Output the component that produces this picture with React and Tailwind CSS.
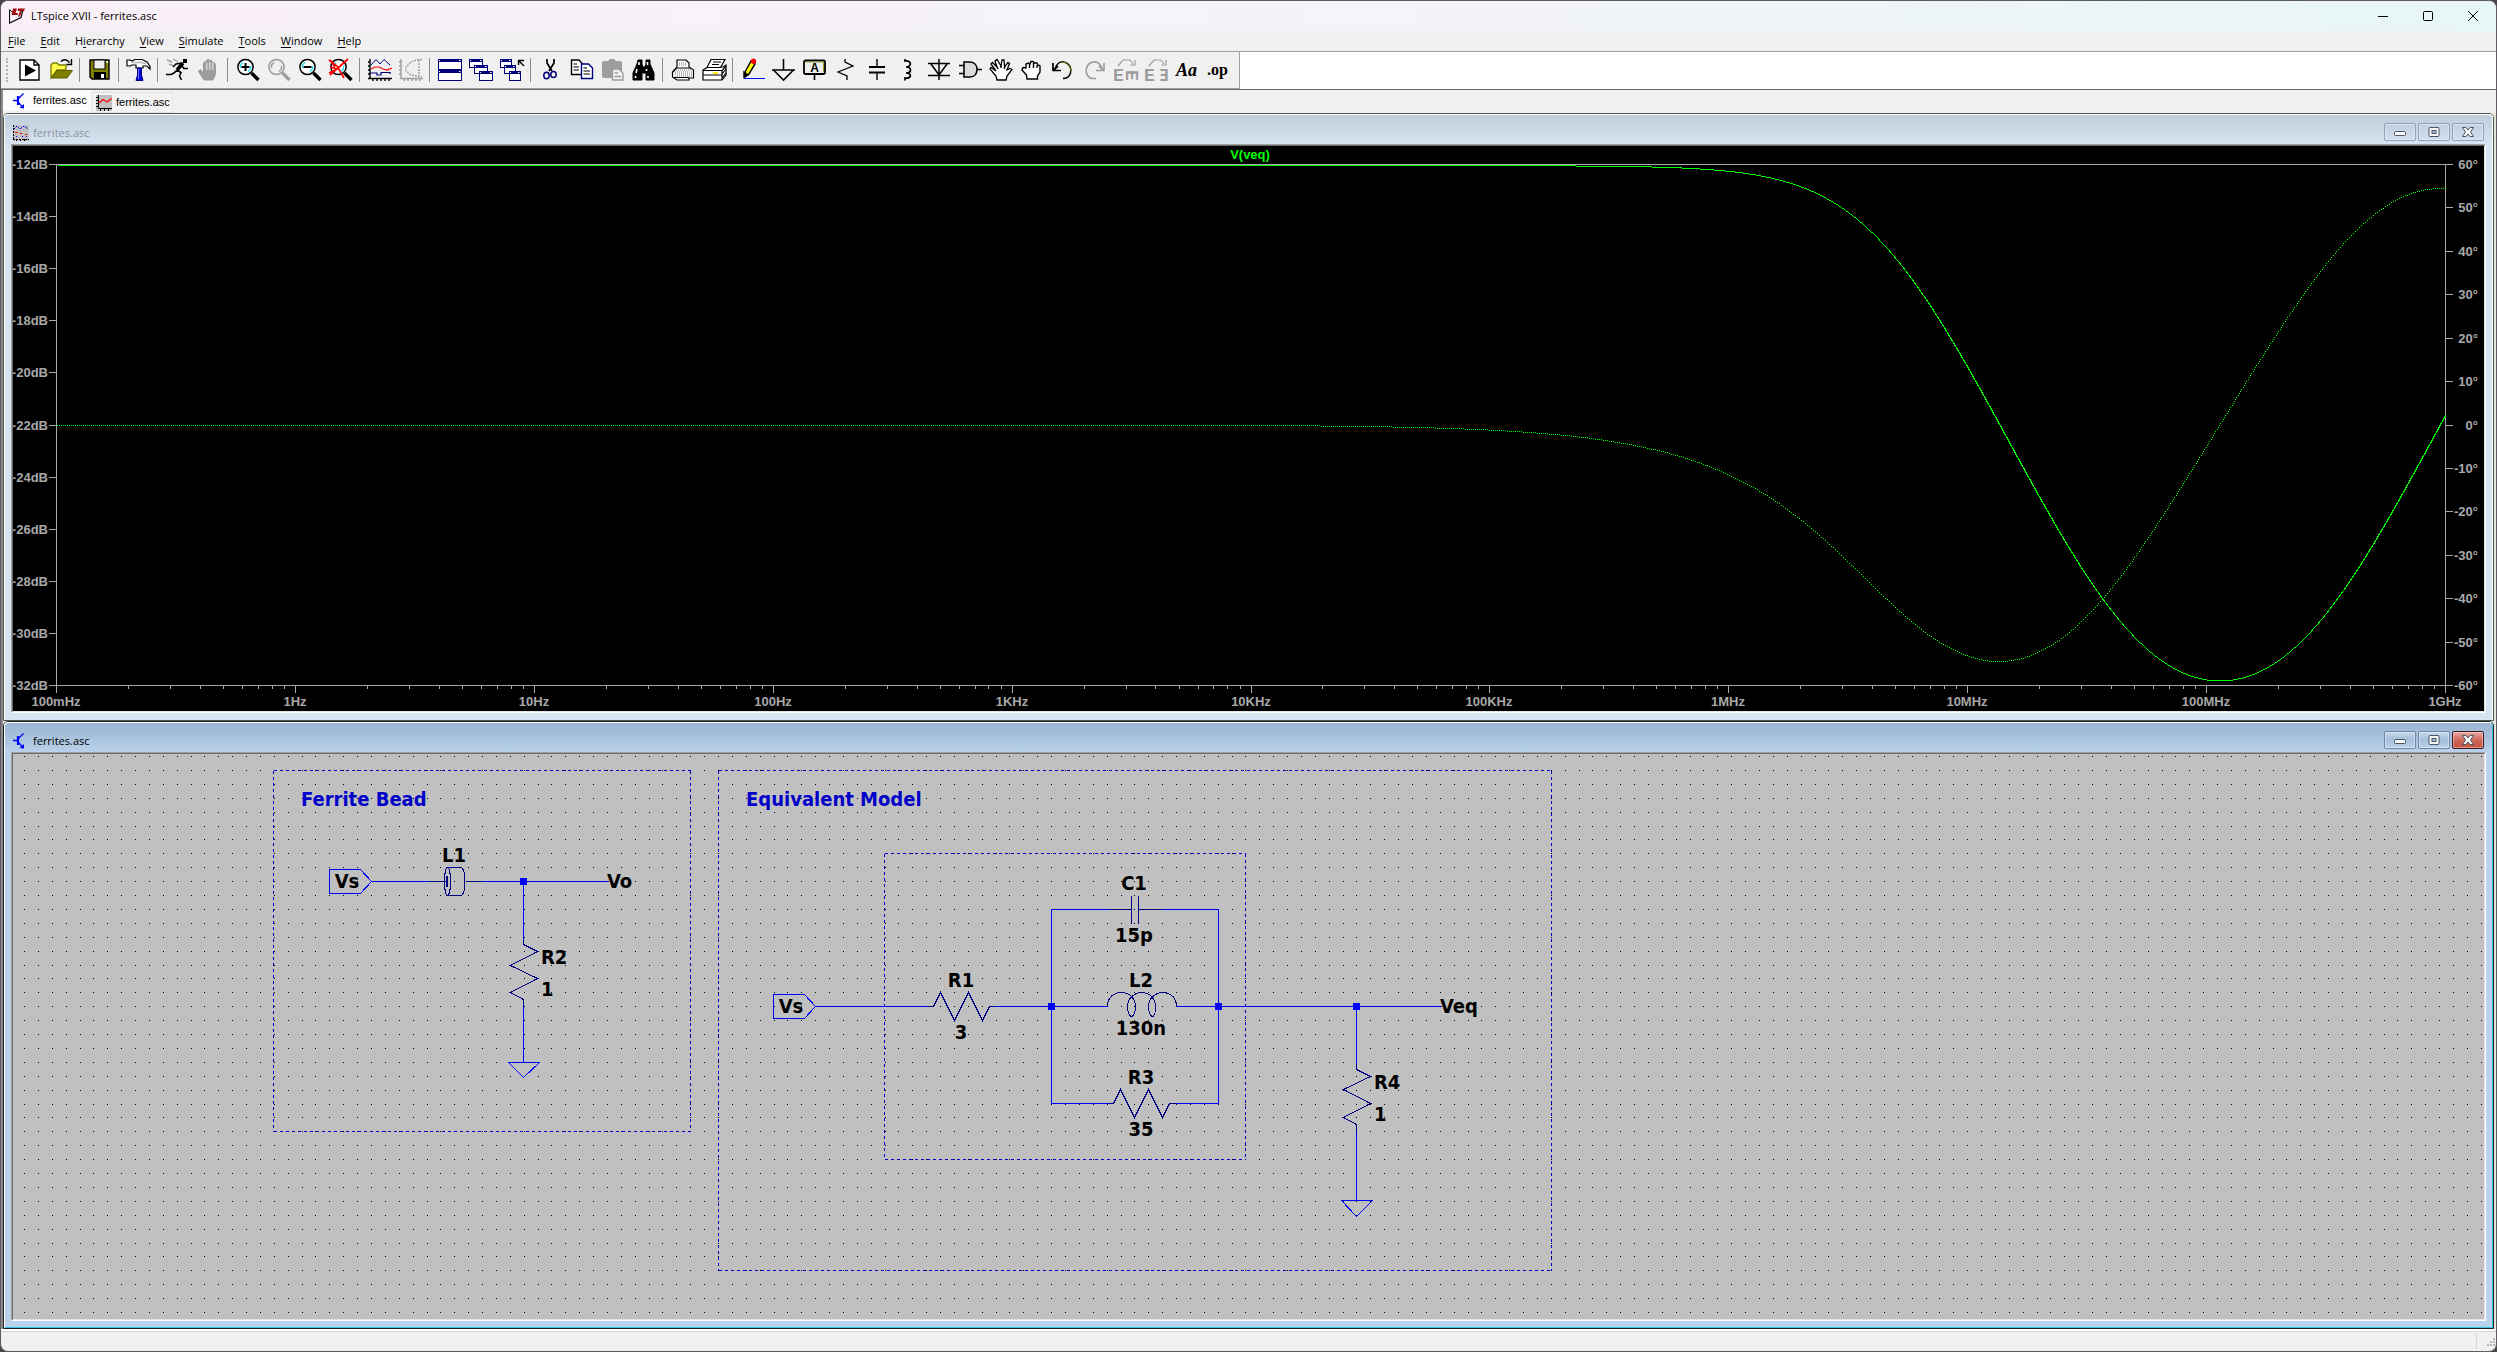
import React from "react";

/* ---------- toolbar icons (24 x 24 grid) ---------- */

const K = "#000";
const G = "#9d9d9d";
const N = "#00007b";

function Icon({ children }) {
  return (
    <svg viewBox="0 0 24 24" className="size-6 overflow-visible" fill="none" stroke={K} strokeWidth="1.4" aria-hidden="true">
      {children}
    </svg>
  );
}

const RunPage = () => (
  <Icon>
    <path d="M2 2H16L21 7V22H2Z" fill="#fff" />
    <path d="M16 2V7H21" />
    <path d="M7 6.500L18 12.500L7 18.500Z" fill={K} stroke="none" />
  </Icon>
);
const OpenFolder = () => (
  <Icon>
    <path d="M2 20V7L4 5H8L10 7H17V12H8L2 20Z" fill="#ffff4a" stroke="#808000" />
    <path d="M2.500 20L8 12.500H23.500L18 20Z" fill="#808000" stroke="#5c5c00" strokeWidth="1" />
    <path d="M12 3.500C14 1 18 1 20.500 4.500" />
    <path d="M22.500 1V6.500H17.500" />
  </Icon>
);
const Save = () => (
  <Icon>
    <path d="M2 2H21V21H4L2 19Z" fill="#808000" />
    <rect x="6" y="2" width="11" height="9" fill="#f0f0f0" strokeWidth="1" />
    <rect x="6" y="14" width="12" height="7" fill={K} stroke="none" />
    <rect x="13" y="16" width="3" height="4" fill="#fff" stroke="none" />
    <rect x="18.500" y="3" width="1.500" height="2" fill="#fff" stroke="none" />
  </Icon>
);
const Hammer = () => (
  <Icon>
    <path d="M0 2H3L5 3L8 1.500H15L20 4L23 8.500V11L20 8H16V10H9V7H5L3 8H0Z" fill="#fff" strokeWidth="1.200" />
    <path d="M5 4.500H15L19 6" stroke="#b5b5b5" />
    <path d="M10.500 10H14.500V17L16 22.500H9L10.500 17Z" fill="#0000e0" stroke="#000080" strokeWidth="1" />
    <path d="M11.500 11V21" stroke="#6f7cff" strokeWidth="1" />
  </Icon>
);
const Runner = () => (
  <Icon>
    <rect x="17" y="1" width="4" height="4" fill={K} stroke="none" />
    <path d="M17 5L11 12" strokeWidth="3.500" />
    <path d="M16 5L10 6L7 9M16 8L18 10.500H22M11 12L15 14.500L13.500 18L15.500 22M11 12L8 15L5 16.500H0" strokeWidth="1.600" />
    <path d="M1 2L6 4M3 6L7 7.500M7 1L12 4" stroke={G} />
  </Icon>
);
const StopHand = () => (
  <Icon>
    <path d="M7 22L3 16L1.500 13L3.500 11.500L6.500 15V5L8 3.500L9.500 5V2.500L11 1L12.500 2.500L13.500 2L15 3V5L17 4.500L18.500 6V16L16 22Z" fill={G} stroke={G} strokeWidth="1" />
    <path d="M9.800 5V12M12.800 4V12M15.800 5V12" stroke="#f0f0f0" strokeWidth="1" />
  </Icon>
);
const Lens = ({ c = K, cy = "#27e0ec", children }) => (
  <Icon>
    <path d="M15.500 15L22.500 22" stroke={c} strokeWidth="3.400" />
    <circle cx="9.500" cy="9" r="7.600" fill="#fff" fillOpacity={c === K ? 1 : 0} stroke={c} strokeWidth="1.500" />
    <path d="M4.500 10V7L7 4.500M14.500 8V11L12 13.500" stroke={cy} strokeWidth="1.400" />
    {children}
  </Icon>
);
const ZoomIn = () => (
  <Lens>
    <path d="M9.500 5V13M5.500 9H13.500" strokeWidth="2" />
  </Lens>
);
const ZoomPlain = () => <Lens c={G} cy={G} />;
const ZoomOut = () => (
  <Lens>
    <path d="M5.500 9H13.500" strokeWidth="2" />
  </Lens>
);
const ZoomFit = () => (
  <Lens>
    <path d="M0 2L8 8L15 20M19 1L9 10L1 17M1 2L6 9M1 9L8 11L0 15" stroke="#f00" strokeWidth="1.700" />
  </Lens>
);
const Traces = () => (
  <Icon>
    <path d="M2 1V20.500H24M0 4H2M0 8H2M0 12H2M0 16H2M0 20.500H2M5 20V23M9 20V23M13 20V23M17 20V23M21 20V23" />
    <path d="M3 7L8 1.500L12 6L16 1.500L22 7" stroke={N} strokeWidth="1" />
    <path d="M3 11L7 9L11 9L15 11L19 12L24 10" stroke="#f00" strokeWidth="1.200" />
    <path d="M2 15H9V17H13V14.500H22V16" stroke={N} strokeWidth="1.200" />
  </Icon>
);
const Nyquist = () => (
  <Icon>
    <path d="M2 1V20.500H24M0 4H2M0 8H2M0 12H2M0 16H2M5 20V23M9 20V23M13 20V23M17 20V23M21 20V23" stroke={G} />
    <path d="M23 1.500H19L12 4L7 9V13L12 17L23 19M20 2V19" stroke={G} strokeDasharray="2 1" />
  </Icon>
);
const Win = ({ x, y, w = 12, h = 9 }) => (
  <g>
    <rect x={x + 0.5} y={y + 0.5} width={w - 1} height={h - 1} fill="#fff" stroke={N} strokeWidth="1" />
    <rect x={x} y={y} width={w} height="3" fill={N} stroke="none" />
    <path d={`M${x + w - 3} ${y + 1.5}h1.500M${x + 1} ${y + 1.5}h1`} stroke="#fff" strokeWidth="1" />
  </g>
);
const TileWin = () => (
  <Icon>
    <Win x={0} y={1} w={24} h={11} />
    <Win x={0} y={12} w={24} h={11} />
  </Icon>
);
const CascadeWin = () => (
  <Icon>
    <Win x={0} y={1} w={14} />
    <Win x={5} y={7} w={14} />
    <Win x={10} y={13} w={14} h={10} />
  </Icon>
);
const CloseAll = () => (
  <Icon>
    <Win x={0} y={1} />
    <Win x={4} y={7} />
    <Win x={9} y={13} h={10} />
    <path d="M18.500 7V2.500H24M19 3L24 8" />
  </Icon>
);
const Cut = () => (
  <Icon>
    <path d="M8 1L8 5L13 13M15 1V5L10 13" strokeWidth="1.700" />
    <ellipse cx="7.500" cy="17.500" rx="2.700" ry="3.300" stroke={N} strokeWidth="1.500" />
    <ellipse cx="14.500" cy="16.500" rx="2.700" ry="3" stroke={N} strokeWidth="1.500" />
  </Icon>
);
const Copy = () => (
  <Icon>
    <path d="M1.500 2H9L12.500 6V16.500H1.500Z" fill="#fff" />
    <path d="M3.500 6H7M3.500 9H9M3.500 12H9" strokeWidth="1.200" />
    <path d="M11.500 6H18.500L22.500 10V20.500H11.500Z" fill="#fff" stroke={N} />
    <path d="M13.500 10H17M13.500 13H20M13.500 16H20" strokeWidth="1.200" />
  </Icon>
);
const Paste = () => (
  <Icon>
    <path d="M1 4L3 3H7L9 1H13L15 3H19L21 4V19L19 20H3L1 19Z" fill={G} stroke="none" />
    <path d="M11.500 11H18L22 15V22H11.500Z" fill="#f0f0f0" stroke={G} />
    <path d="M13.500 15H17M13.500 18.500H20" stroke={G} />
  </Icon>
);
const Binoculars = () => (
  <Icon>
    <path d="M6 2H10V6L11 9H13L14 6V2H18V6L22 15V22H14V15H10V22H1V15L5 6Z" fill={K} strokeWidth="1" />
    <path d="M7 4V7M15.500 4V7M5 11L4 15M14.500 11V13M3.500 18V20M16 18V20" stroke="#fff" strokeWidth="1.600" />
  </Icon>
);
const PrintSetup = () => (
  <Icon>
    <path d="M6 9V2H15L18 5V9L22.500 12V20H18V22H6L1.500 19V14L6 9Z" fill="#fff" strokeWidth="1.200" />
    <path d="M2 19.500H18M2 14.500L5.500 10H19" strokeWidth="1" />
    <path d="M8 5H16M8 7H16M5 12H21M4 14H21M4 16H21M4 18H21" stroke="#777" strokeWidth="1.200" strokeDasharray="1 1" />
  </Icon>
);
const Print = () => (
  <Icon>
    <path d="M1 12L6 9H21L24 7V17L20 22H1Z" fill="#fff" strokeWidth="1.200" />
    <path d="M1 12.500H20M20 12.500V22M20 12.500L24 8M20 16L24 11M1 17H20M20 20L24 15" strokeWidth="1.200" />
    <path d="M5 9.500L9 1.500H23L18.500 9.500Z" fill="#fff" strokeWidth="1.200" />
    <path d="M11 4H19M10 6.500H17" strokeWidth="1.200" />
    <path d="M11 15H16" stroke="#ffef00" strokeWidth="1.800" />
  </Icon>
);
const Pencil = () => (
  <Icon>
    <path d="M4 14L10 3L14 6L8 16L4 18.500Z" fill="#ffff00" strokeWidth="1.500" />
    <path d="M3 14L7 17L3 19.500Z" fill={K} />
    <circle cx="12.500" cy="3.200" r="2.600" fill="#f00" stroke="none" />
    <path d="M3 20.500H24" stroke="#0000ff" strokeWidth="1.200" />
  </Icon>
);
const Ground = () => (
  <Icon>
    <path d="M11.500 1V12M0 12H23" strokeWidth="1.600" />
    <path d="M1.500 12L11.500 22L21.500 12" strokeWidth="1.600" />
  </Icon>
);
const NetLabel = () => (
  <Icon>
    <rect x="1" y="2.500" width="21" height="13.500" rx="1.500" strokeWidth="1.800" />
    <path d="M3 4H20.500V14.500" stroke="#9a9a30" strokeWidth="1" />
    <path d="M11.500 16V22" strokeWidth="1.600" />
    <text x="11.500" y="14" textAnchor="middle" fontFamily="Liberation Sans, sans-serif" fontWeight="bold" fontSize="12" fill={K} stroke="none">A</text>
  </Icon>
);
const ResistorI = () => (
  <Icon>
    <path d="M11 1V4L19 8L4 14L13 18V22" strokeWidth="1.300" />
  </Icon>
);
const CapacitorI = () => (
  <Icon>
    <path d="M12 1V9M12 15V22" />
    <path d="M4 9H20M4 14.500H20" strokeWidth="2.200" />
  </Icon>
);
const InductorI = () => (
  <Icon>
    <path d="M9 1V3C16 2 16 9 10 9C16 9 16 15 10 15C16 15 16 21 9 20V22.500" strokeWidth="1.700" />
  </Icon>
);
const DiodeI = () => (
  <Icon>
    <path d="M1 5.500H23M1 17.500H23M12 1V22M4 6L12 17L20 6" strokeWidth="1.500" />
  </Icon>
);
const GateI = () => (
  <Icon>
    <path d="M6 4H12C17 4 19 8 19 11.500C19 15 17 19 12 19H6Z" fill="#dcdcdc" strokeWidth="1.600" />
    <path d="M1 7.500H6M1 15.500H6M19 11.500H24" strokeWidth="1.600" />
  </Icon>
);
const MoveHand = () => (
  <Icon>
    <path d="M8 22L7 18L1 11L2 9.500L7 13L2 6L3.500 4.500L8 9L6 3L8 1.500L12 8L13 2L15 2L15.500 9L19 4.500L20.500 5.500L18 12L21 10.500L23 11.500L18 18L17 22Z" fill="#fff" strokeWidth="1.300" />
    <path d="M9 11L8 9M12 10L12 8M15.500 11V9" />
  </Icon>
);
const DragHand = () => (
  <Icon>
    <path d="M7 21L6.500 17L2 12L3 9.500L6 10V6L8.500 5L10 6L11 3.500H13L14.500 5L17 5L18 7L20 8V14L17.500 18V21Z" fill="#fff" strokeWidth="1.400" />
    <path d="M9.500 6V10M13.500 5V10M17 7V10" />
  </Icon>
);
const Undo = () => (
  <Icon>
    <path d="M4 11C5 6 9 3 13 4C18 5 21 10 19.500 15C18.500 18.500 16 20.500 12 20.500" strokeWidth="1.500" />
    <path d="M10 4.500C15 3 20 8 20 13" stroke="#808000" strokeWidth="1" />
    <path d="M2 5V12.500H10M2.500 12L7 8" strokeWidth="1.700" />
  </Icon>
);
const Redo = () => (
  <Icon>
    <path d="M20 11C19 6 15 3 11 4C6 5 3 10 4.500 15C5.500 18.500 8 20.500 11 20.500H14" stroke={G} strokeWidth="1.700" />
    <path d="M22 5V12.500H14M21.500 12L17 8" stroke={G} strokeWidth="1.700" />
  </Icon>
);
const Letter = (p) => (
  <text {...p} fontFamily="Liberation Mono, monospace" fontWeight="bold" fontSize="18" fill={G} stroke="none">E</text>
);
const Rotate = () => (
  <Icon>
    <path d="M5 8L10 2H17L20 6M22 2V7H17" stroke={G} strokeWidth="1.200" />
    <Letter x="0" y="23" />
    <Letter x="0" y="0" transform="translate(13 12) rotate(90)" />
  </Icon>
);
const Mirror = () => (
  <Icon>
    <path d="M5 8L10 2H17L20 6M22 2V7H17" stroke={G} strokeWidth="1.200" />
    <Letter x="0" y="23" />
    <text x="15" y="23" fontFamily="DejaVu Sans Mono, monospace" fontWeight="bold" fontSize="16" fill={G} stroke="none">Ǝ</text>
  </Icon>
);
const TextTool = () => <span className="font-[Liberation_Serif,serif] text-[18px] leading-6 font-bold italic">Aa</span>;
const OpTool = () => <span className="font-[Liberation_Serif,serif] text-[16px] leading-5 font-bold">.op</span>;

const GROUPS = [
  [["Run", RunPage], ["Open", OpenFolder]],
  [["Save", Save]],
  [["Control Panel", Hammer]],
  [["Run simulation", Runner], ["Halt", StopHand]],
  [["Zoom in", ZoomIn], ["Pan", ZoomPlain], ["Zoom out", ZoomOut], ["Zoom full extents", ZoomFit]],
  [["Autorange", Traces], ["Nyquist plot", Nyquist]],
  [["Tile windows", TileWin], ["Cascade windows", CascadeWin], ["Close all", CloseAll]],
  [["Cut", Cut], ["Copy", Copy], ["Paste", Paste], ["Find", Binoculars]],
  [["Print setup", PrintSetup], ["Print", Print]],
  [
    ["Wire", Pencil], ["Ground", Ground], ["Label net", NetLabel], ["Resistor", ResistorI],
    ["Capacitor", CapacitorI], ["Inductor", InductorI], ["Diode", DiodeI], ["Component", GateI],
    ["Move", MoveHand], ["Drag", DragHand], ["Undo", Undo], ["Redo", Redo],
    ["Rotate", Rotate], ["Mirror", Mirror], ["Text", TextTool], ["SPICE directive", OpTool],
  ],
];

function Separator() {
  return (
    <div className="h-6 w-2 shrink-0 pl-[3px]">
      <div className="h-6 w-px bg-[#8c8c8c]" />
    </div>
  );
}

function Toolbar() {
  return (
    <div role="toolbar" className="flex border-t border-b border-t-[#a0a0a0] border-b-[#696969] bg-white">
      <div className="flex h-[37px] items-center border-r border-b border-[#a0a0a0] bg-[#f0f0f0] pr-1.5">
        <div className="ml-[5px] h-6 w-2 border-l-2 border-dotted border-[#b4b4b4]" />
        {GROUPS.map((group, i) => (
          <React.Fragment key={i}>
            {i > 0 && <Separator />}
            {group.map(([name, Glyph]) => (
              <button key={name} type="button" aria-label={name} className="flex w-[31px] justify-center">
                <Glyph />
              </button>
            ))}
          </React.Fragment>
        ))}
      </div>
    </div>
  );
}

/* ---------- small icons ---------- */

const AppLogo = () => (
  <svg viewBox="0 0 16 16" className="size-4" aria-hidden="true">
    <path d="M0.500 1.500V15L12 9.500L14 2" fill="none" stroke="#111" strokeWidth="1.200" />
    <path d="M1 2L5 6" stroke="#111" />
    <path d="M4 0.500H8L6.500 5H9L8.500 7H2.500ZM9 0.500H16L15 3H13L11 8.500H9L11 3H8.500Z" fill="#a00b12" />
  </svg>
);
const Transistor = () => (
  <svg viewBox="0 0 16 16" className="size-4" fill="none" stroke="#0000ff" aria-hidden="true">
    <path d="M0 7.500H4" strokeWidth="1.500" />
    <path d="M5 3V12" strokeWidth="2.200" />
    <path d="M5 6L10.500 0.500M5 9L10 14.500" strokeWidth="1.300" />
    <path d="M11 15.500V11L6.500 15Z" fill="#0000ff" stroke="none" />
  </svg>
);
const PlotTab = () => (
  <svg viewBox="0 0 16 16" className="size-4" fill="none" stroke="#000" aria-hidden="true">
    <rect width="16" height="16" fill="#c0c0c0" stroke="none" />
    <path d="M2.500 0V13.500H16M0 2.500H2M0 5.500H2M0 8.500H2M0 11.500H2M4.500 14V16M8.500 14V16M12.500 14V16" />
    <path d="M3 8L7 4.500L11 7L15.500 3.500" stroke="#f00" strokeWidth="1.400" />
  </svg>
);
const PlotIcon = () => (
  <svg viewBox="0 0 16 16" className="size-4" fill="none" stroke="#000" aria-hidden="true">
    <rect width="16" height="16" fill="#c0c0c0" stroke="none" />
    <path d="M0.500 0V14M0 14.500H16M3.500 14V16M7.500 14V16M11.500 14V16" strokeDasharray="2 1" />
    <path d="M1 4L4 1L7 4L11 1L15 4" stroke="#0000ff" strokeDasharray="2 1" />
    <path d="M2 7.500H5M7 8.500H9M12 9.500H14" stroke="#f00" />
    <path d="M3 11.500H6M9 11.500H14" stroke="#0000ff" strokeDasharray="1 3" />
  </svg>
);

/* ---------- MDI child window ---------- */

function CaptionButton({ label, active, close, children }) {
  const tone = close && active
    ? "border-[#431422] bg-linear-to-b from-[#e8a99f] via-[#d0685a] via-50% to-[#c5523a]"
    : active
      ? "border-[#6d83a8] bg-linear-to-b from-[#c6d8ea] via-[#a3bfdb] via-50% to-[#bad1ea]"
      : "border-[#8e9fba] bg-linear-to-b from-[#c3d0e0] to-[#d2deeb]";
  return (
    <button type="button" aria-label={label} className={`flex h-[18px] w-8 items-center justify-center rounded-[2px] border inset-ring inset-ring-white/40 ${tone}`}>
      <svg viewBox="0 0 12 10" className="h-[10px] w-3" fill="#f4f4f4" stroke="#4c5468" strokeWidth="1" aria-hidden="true">
        {children}
      </svg>
    </button>
  );
}

function ChildWindow({ title, icon, active, children }) {
  return (
    <section
      className={
        active
          ? "flex min-h-0 flex-1 basis-0 flex-col rounded-t-[5px] border border-[#1b1f22] bg-[#b9d1ea]"
          : "flex min-h-0 flex-1 basis-0 flex-col rounded-t-[5px] border border-[#4b554f] bg-[#d7e4f2]"
      }
    >
      <div
        className={
          active
            ? "flex min-h-0 flex-1 flex-col rounded-t-[4px] border-t border-r border-b border-l border-t-white border-r-[#35c7e8] border-b-[#35c7e8] border-l-white"
            : "flex min-h-0 flex-1 flex-col rounded-t-[4px] border-t border-r border-l border-white"
        }
      >
        <header
          className={
            active
              ? "flex h-[29px] items-end justify-between rounded-t-[4px] bg-linear-to-b from-[#99b4d1] to-[#b9d1ea] px-2"
              : "flex h-[29px] items-end justify-between rounded-t-[4px] bg-linear-to-b from-[#bfcddb] to-[#d7e4f2] px-2"
          }
        >
          <div className="flex items-center gap-1 pb-[3px]">
            {icon}
            <h2 className={active ? "text-[11px] leading-4 text-black" : "text-[11px] leading-4 text-[#8e959c]"}>{title}</h2>
          </div>
          <div className="flex gap-0.5 pb-[3px]">
            <CaptionButton label="Minimize" active={active}>
              <rect x="0.500" y="4.500" width="11" height="4" rx="1" />
            </CaptionButton>
            <CaptionButton label="Maximize" active={active}>
              <rect x="1" y="0.500" width="10" height="9" rx="1" />
              <rect x="4" y="3.500" width="4" height="3" fill="#a9bdd4" />
            </CaptionButton>
            <CaptionButton label="Close" active={active} close>
              <path d="M0.500 0.500H4L6 3L8 0.500H11.500L8.500 5L11.500 9.500H8L6 7L4 9.500H0.500L3.500 5Z" />
            </CaptionButton>
          </div>
        </header>
        <div className={active ? "flex min-h-0 flex-1 flex-col px-1.5 pb-1.5" : "flex min-h-0 flex-1 flex-col px-1.5 pb-[7px]"}>
          <div className="flex min-h-0 flex-1 border border-t-[#a0a0a0] border-r-white border-b-white border-l-[#a0a0a0]">
            <div className="min-h-0 flex-1 border border-t-[#696969] border-r-[#e3e3e3] border-b-[#e3e3e3] border-l-[#696969]">
              {children}
            </div>
          </div>
        </div>
      </div>
    </section>
  );
}

/* ---------- Bode plot ---------- */

const L0 = 56;
const R0 = 2445;
const T0 = 164;
const B0 = 685;

// Divider: 3 ohm source + (15 pF || 130 nH || 35 ohm) into a 1 ohm load.
function response(f) {
  const w = 2 * Math.PI * f;
  const g = 1 / 35;
  const b = w * 15e-12 - 1 / (w * 130e-9);
  const m = g * g + b * b;
  const re = 4 + g / m;
  const im = -b / m;
  return { db: -10 * Math.log10(re * re + im * im), ph: (-Math.atan2(im, re) * 180) / Math.PI };
}

const magnitude = [];
const phase = [];
for (let x = L0 + 1; x <= R0; x++) {
  const { db, ph } = response(10 ** (-1 + ((x - L0) / (R0 - L0)) * 10));
  magnitude.push([x, Math.round(T0 + 0.12 + ((-12 - db) / 20) * (B0 - T0))]);
  phase.push([x, Math.round((T0 + B0) / 2 - (ph / 120) * (B0 - T0))]);
}
const magnitudePath = "M" + magnitude.map(([x, y]) => `${x + 0.5} ${y + 0.5}`).join("L");

const phaseDots = [];
let step = 0;
phase.forEach(([x, y], i) => {
  const next = phase[i + 1] ? phase[i + 1][1] : y;
  const run = Math.max(1, Math.abs(next - y));
  for (let k = 0; k < run; k++) {
    if (step++ % 2 === 0) phaseDots.push(`M${x} ${y + Math.sign(next - y) * k}h1v1h-1z`);
  }
});
const phasePath = phaseDots.join("");

const FREQS = ["100mHz", "1Hz", "10Hz", "100Hz", "1KHz", "10KHz", "100KHz", "1MHz", "10MHz", "100MHz", "1GHz"];
const DBS = [-12, -14, -16, -18, -20, -22, -24, -26, -28, -30, -32];
const DEGS = [60, 50, 40, 30, 20, 10, 0, -10, -20, -30, -40, -50, -60];

const majorX = (i) => Math.round(L0 + ((R0 - L0) * i) / 10);
let ticks = "";
FREQS.forEach((_, i) => {
  ticks += `M${majorX(i) + 0.5} ${B0}V${B0 + 8}`;
  if (i < 10) {
    for (let k = 2; k < 10; k++) {
      ticks += `M${Math.round(L0 + ((R0 - L0) * (i + Math.log10(k))) / 10) + 0.5} ${B0}V${B0 + 4}`;
    }
  }
});
const dbY = (i) => Math.round(T0 + ((B0 - T0) * i) / 10);
const degY = (i) => Math.round(T0 + ((B0 - T0) * i) / 12);
DBS.forEach((_, i) => { ticks += `M${L0 - 7} ${dbY(i) + 0.5}H${L0}`; });
DEGS.forEach((_, i) => { ticks += `M${R0} ${degY(i) + 0.5}H${R0 + 8}`; });

function BodePlot() {
  return (
    <div className="h-full w-full bg-black">
      <svg viewBox="13 146 2471 565" className="block h-full w-full" fontFamily="Liberation Sans, Arial, sans-serif" fontSize="13" fontWeight="bold" fill="#a8a8a8">
        <g fill="none" strokeWidth="1" shapeRendering="crispEdges">
          <path d={`M${L0 + 0.5} ${T0 + 0.5}H${R0 + 0.5}V${B0 + 0.5}H${L0 + 0.5}Z${ticks}`} stroke="#a8a8a8" />
          <path d={magnitudePath} stroke="#00ff00" />
        </g>
        <path d={phasePath} fill="#00ff00" shapeRendering="crispEdges" />
        <text x="1250" y="159" textAnchor="middle" fill="#00ff00">V(veq)</text>
        {FREQS.map((f, i) => (
          <text key={f} x={majorX(i)} y="706" textAnchor="middle">{f}</text>
        ))}
        {DBS.map((d, i) => (
          <text key={d} x="48" y={dbY(i) + 5} textAnchor="end">{d}dB</text>
        ))}
        {DEGS.map((d, i) => (
          <text key={d} x="2478" y={degY(i) + 5} textAnchor="end">{d}°</text>
        ))}
      </svg>
    </div>
  );
}

/* ---------- schematic ---------- */

let grid = "";
for (let j = 0; j <= 40; j++) {
  for (let i = 0; i <= 177; i++) {
    grid += `M${Math.round(24 + i * 13.88)} ${Math.round(756 + j * 13.9)}h1v1h-1z`;
  }
}

const LABELS = [
  [301, 806, "Ferrite Bead", "start", "#0000c8"],
  [746, 806, "Equivalent Model", "start", "#0000c8"],
  [454, 862, "L1", "middle"],
  [347, 888, "Vs", "middle"],
  [607, 888, "Vo", "start"],
  [541, 964, "R2", "start"],
  [541, 996, "1", "start"],
  [791, 1013, "Vs", "middle"],
  [961, 987, "R1", "middle"],
  [961, 1039, "3", "middle"],
  [1134, 890, "C1", "middle"],
  [1134, 942, "15p", "middle"],
  [1141, 987, "L2", "middle"],
  [1141, 1035, "130n", "middle"],
  [1141, 1084, "R3", "middle"],
  [1141, 1136, "35", "middle"],
  [1440, 1013, "Veq", "start"],
  [1374, 1089, "R4", "start"],
  [1374, 1121, "1", "start"],
];

function Schematic() {
  return (
    <div className="h-full w-full bg-[#c0c0c0]">
      <svg viewBox="13 754 2471 565" className="block h-full w-full">
        <path d={grid} fill="#000" shapeRendering="crispEdges" />
        <g transform="translate(0.5 0.5)" fill="none" strokeWidth="1" shapeRendering="crispEdges">
          <g stroke="#0000c8" strokeDasharray="3 3">
            <path d="M273 770H690M273 770V1131M690 770V1131M273 1131H690" />
            <path d="M718 770H1551M718 770V1270M1551 770V1270M718 1270H1551" />
            <path d="M884 853H1245M884 853V1159M1245 853V1159M884 1159H1245" />
          </g>
          <g stroke="#0000ff">
            <path d="M329 869H360L371 881L360 893H329Z" />
            <path d="M371 881H427M483 881H608M523 881V938M523 1005V1062" />
            <path d="M508 1062H539L523 1077Z" />
            <path d="M773 994H804L815 1006L804 1018H773Z" />
            <path d="M815 1006H927M995 1006H1107M1176 1006H1441" />
            <path d="M1108 909H1051V1103H1108M1162 909H1218V1103H1175" />
            <path d="M1356 1006V1063M1356 1131V1200" />
            <path d="M1341 1200H1372L1356 1216Z" />
          </g>
          <g stroke="#000080">
            <path d="M427 881H446M465 881H483" />
            <path d="M447 867H461C463 869 464 872 464 875V887C464 890 463 893 461 895H447" />
            <ellipse cx="447" cy="881" rx="3" ry="14" />
            <path d="M446 875V886M447 875V886" />
            <path d="M523 938V944L537 951L510 965L537 978L510 992L523 999V1005" />
            <path d="M927 1006H933L940 992L954 1020L968 992L982 1020L989 1006H995" />
            <path d="M1108 909H1131M1138 909H1162M1131 895V923M1138 895V923" />
            <path d="M1107 1006C1107 997 1113 992 1121 992C1130 992 1135 999 1135 1006C1135 1012 1133 1016 1131 1016C1129 1016 1127 1012 1127 1006C1127 998 1134 992 1141 992C1150 992 1155 999 1155 1006C1155 1012 1154 1016 1152 1016C1150 1016 1148 1012 1148 1006C1148 998 1155 992 1162 992C1171 992 1176 998 1176 1006" />
            <path d="M1108 1103H1113L1120 1089L1134 1117L1148 1089L1162 1117L1169 1103H1175" />
            <path d="M1356 1063V1069L1370 1076L1343 1089L1370 1103L1343 1117L1356 1124V1131" />
          </g>
        </g>
        <g fill="#0000ff">
          <rect x="520" y="878" width="7" height="7" />
          <rect x="1048" y="1003" width="7" height="7" />
          <rect x="1215" y="1003" width="7" height="7" />
          <rect x="1353" y="1003" width="7" height="7" />
        </g>
        <g fontFamily="DejaVu Sans Condensed, Noto Sans, sans-serif" fontSize="20" fontWeight="bold">
          {LABELS.map(([x, y, t, anchor, color], i) => (
            <text key={i} x={x} y={y} textAnchor={anchor} fill={color || "#000"}>{t}</text>
          ))}
        </g>
      </svg>
    </div>
  );
}

/* ---------- application ---------- */

const MENU = ["File", "Edit", "Hierarchy", "View", "Simulate", "Tools", "Window", "Help"];
const HOT = { Hierarchy: 1 };

export default function App() {
  return (
    <div className="h-screen bg-[#4a474b] font-[Open_Sans,Noto_Sans,sans-serif] text-black">
      <div className="flex h-full flex-col overflow-hidden rounded-lg border border-[#5f5b60] bg-[#f0f0f0]">
        <header className="flex h-[30px] shrink-0 items-center justify-between bg-linear-to-r from-[#faeff7] via-[#f5f3fa] to-[#e7f6f7] pl-2">
          <div className="flex items-center gap-1.5">
            <AppLogo />
            <h1 className="text-[11px] leading-4">LTspice XVII - ferrites.asc</h1>
          </div>
          <div className="flex">
            <button type="button" aria-label="Minimize" className="flex w-[45px] justify-center">
              <svg viewBox="0 0 10 10" className="size-2.5" fill="none" stroke="#000"><path d="M0 5.500H10" /></svg>
            </button>
            <button type="button" aria-label="Maximize" className="flex w-[45px] justify-center">
              <svg viewBox="0 0 10 10" className="size-2.5" fill="none" stroke="#000"><rect x="0.500" y="0.500" width="9" height="9" rx="1" /></svg>
            </button>
            <button type="button" aria-label="Close" className="flex w-[46px] justify-center">
              <svg viewBox="0 0 10 10" className="size-2.5" fill="none" stroke="#000"><path d="M0 0L10 10M10 0L0 10" /></svg>
            </button>
          </div>
        </header>

        <nav className="flex h-5 shrink-0 items-center gap-px">
          {MENU.map((m) => {
            const k = HOT[m] || 0;
            return (
              <button key={m} type="button" className="px-[7px] text-[11px] leading-4">
                {m.slice(0, k)}
                <span className="underline underline-offset-2">{m[k]}</span>
                {m.slice(k + 1)}
              </button>
            );
          })}
        </nav>

        <Toolbar />

        <div className="flex h-[23px] shrink-0 border-l-2 border-[#8a8a8a] font-[Liberation_Sans,sans-serif] text-[11px]" role="tablist">
          <button type="button" role="tab" aria-selected="true" className="flex h-[21px] w-[88px] items-center gap-1 bg-[#fbfbfb] pl-[10px]">
            <Transistor />
            <span>ferrites.asc</span>
          </button>
          <button type="button" role="tab" aria-selected="false" className="mt-0.5 flex h-[21px] w-[82px] items-center gap-1 border border-[#e3e3e3] bg-[#f3f3f3] pl-1">
            <PlotTab />
            <span>ferrites.asc</span>
          </button>
        </div>

        <main className="flex min-h-0 flex-1 flex-col border-l-2 border-[#8a8a8a] bg-[#e6e3d8] pr-0.5">
          <ChildWindow title="ferrites.asc" icon={<PlotIcon />}>
            <BodePlot />
          </ChildWindow>
          <ChildWindow title="ferrites.asc" icon={<Transistor />} active>
            <Schematic />
          </ChildWindow>
        </main>

        <footer className="flex h-[22px] shrink-0 justify-end border-t-2 border-white">
          <div className="flex flex-1 items-end justify-end border-t border-[#d7d7d7]">
            <div className="mb-0.5 h-4 w-[18px] border-l border-[#d7d7d7]" />
            <svg viewBox="0 0 10 10" className="mb-1 -ml-2 size-2.5" fill="#b8b8b8" aria-hidden="true">
              <path d="M7 1h2v2h-2zM4 4h2v2h-2zM7 4h2v2h-2zM1 7h2v2h-2zM4 7h2v2h-2zM7 7h2v2h-2z" />
            </svg>
          </div>
        </footer>
      </div>
    </div>
  );
}
